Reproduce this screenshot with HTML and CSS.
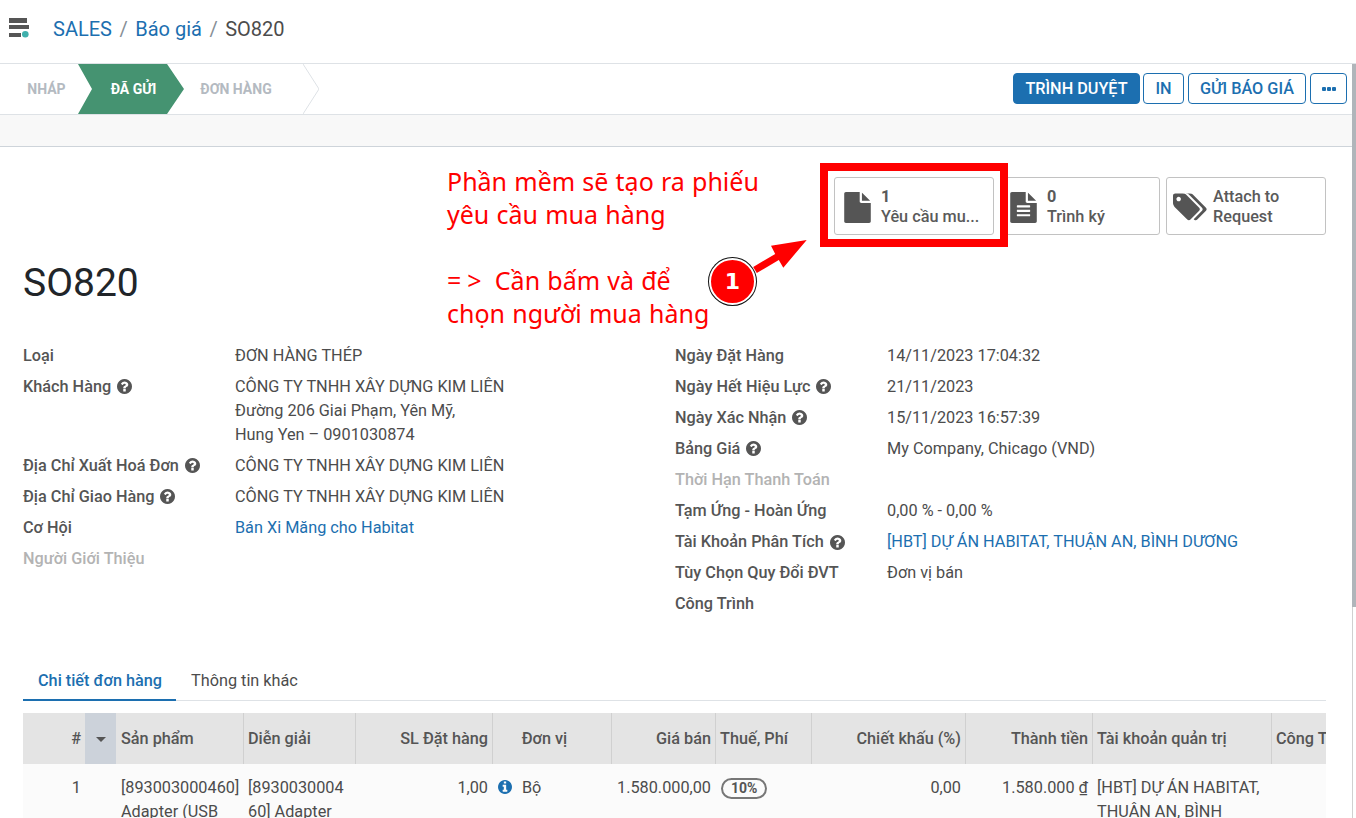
FILE: index.html
```html
<!DOCTYPE html>
<html lang="vi">
<head>
    <meta charset="UTF-8">
    <meta name="viewport" content="width=device-width, initial-scale=1.0">
    <title>SO820</title>
    <link rel="stylesheet" href="styles.css">
</head>
<body>
    <svg class="icon-defs" xmlns="http://www.w3.org/2000/svg">
        <symbol id="i-file" viewBox="128 0 1536 1792"><path d="M1152 512v-472q22 14 36 28l408 408q14 14 28 36h-472zm-128 32q0 40 28 68t68 28h544v1056q0 40-28 68t-68 28h-1344q-40 0-68-28t-28-68v-1600q0-40 28-68t68-28h800v544z"/></symbol>
        <symbol id="i-file-text" viewBox="128 0 1536 1792"><path d="M1596 476q14 14 28 36h-472v-472q22 14 36 28zm-476 164h544v1056q0 40-28 68t-68 28h-1344q-40 0-68-28t-28-68v-1600q0-40 28-68t68-28h800v544q0 40 28 68t68 28zm160 736v-64q0-14-9-23t-23-9h-704q-14 0-23 9t-9 23v64q0 14 9 23t23 9h704q14 0 23-9t9-23zm0-256v-64q0-14-9-23t-23-9h-704q-14 0-23 9t-9 23v64q0 14 9 23t23 9h704q14 0 23-9t9-23zm0-256v-64q0-14-9-23t-23-9h-704q-14 0-23 9t-9 23v64q0 14 9 23t23 9h704q14 0 23-9t9-23z"/></symbol>
        <symbol id="i-tags" viewBox="0 128 1920 1536"><path d="M448 448q0-53-37.500-90.500t-90.500-37.500-90.500 37.500-37.500 90.500 37.500 90.500 90.500 37.500 90.500-37.500 37.500-90.500zm1067 576q0 53-37 90l-491 492q-39 37-91 37-53 0-90-37l-715-716q-38-37-64.500-101t-26.500-117v-416q0-52 38-90t90-38h416q53 0 117 26.500t102 64.500l715 714q37 39 37 91zm384 0q0 53-37 90l-491 492q-39 37-91 37-36 0-59-14t-53-45l470-470q37-37 37-90 0-52-37-91l-715-714q-38-38-102-64.500t-117-26.500h224q53 0 117 26.500t102 64.500l715 714q37 39 37 91z"/></symbol>
        <symbol id="i-help" viewBox="128 128 1536 1536"><path d="M1024 1376v-192q0-14-9-23t-23-9h-192q-14 0-23 9t-9 23v192q0 14 9 23t23 9h192q14 0 23-9t9-23zm256-672q0-88-55.500-163t-138.500-116-170-41q-243 0-371 213-15 24 8 42l132 100q7 6 19 6 16 0 25-12 53-68 86-92 34-24 86-24 48 0 85.500 26t37.500 59q0 38-20 61t-68 45q-63 28-115.500 86.500t-52.500 125.500v36q0 14 9 23t23 9h192q14 0 23-9t9-23q0-19 21.500-49.500t54.500-49.500q32-18 49-28.500t46-35 44.500-48 28-60.500 12.500-81zm384 192q0 209-103 385.500t-279.500 279.500-385.500 103-385.500-103-279.500-279.500-103-385.500 103-385.500 279.500-279.500 385.500-103 385.500 103 279.500 279.500 103 385.500z"/></symbol>
        <symbol id="i-info" viewBox="128 128 1536 1536"><path d="M1152 1376v-160q0-14-9-23t-23-9h-96v-512q0-14-9-23t-23-9h-320q-14 0-23 9t-9 23v160q0 14 9 23t23 9h96v320h-96q-14 0-23 9t-9 23v160q0 14 9 23t23 9h448q14 0 23-9t9-23zm-128-896v-160q0-14-9-23t-23-9h-192q-14 0-23 9t-9 23v160q0 14 9 23t23 9h192q14 0 23-9t9-23zm640 416q0 209-103 385.500t-279.500 279.500-385.500 103-385.500-103-279.500-279.500-103-385.500 103-385.500 279.500-279.500 385.500-103 385.500 103 279.500 279.500 103 385.500z"/></symbol>
    </svg>

    <header class="topbar">
        <svg class="logo" viewBox="0 0 21 20" width="21" height="20">
            <rect x="0" y="0" width="18" height="5" fill="#555"/>
            <rect x="0" y="7" width="20" height="4" fill="#555"/>
            <rect x="0" y="15" width="12" height="4" fill="#555"/>
            <circle cx="16.300" cy="16.300" r="3.300" fill="#3fb0ac"/>
        </svg>
        <nav class="breadcrumb">
            <a>SALES</a><span class="sep">/</span><a>Báo giá</a><span class="sep">/</span><span>SO820</span>
        </nav>
    </header>

    <div class="statusbar">
        <div class="stages">
            <div class="stage stage-draft">NHÁP</div>
            <div class="stage stage-active">ĐÃ GỬI</div>
            <div class="stage stage-next">ĐƠN HÀNG</div>
            <svg class="stage-end" viewBox="0 0 16 50" width="16" height="50"><path d="M0 0L16 25L0 50" fill="none" stroke="#dee2e6"/></svg>
        </div>
        <div class="actions">
            <button class="btn btn-primary btn-approve">TRÌNH DUYỆT</button>
            <button class="btn btn-print">IN</button>
            <button class="btn btn-send">GỬI BÁO GIÁ</button>
            <button class="btn btn-more"><span class="dots"><i></i><i></i><i></i></span></button>
        </div>
    </div>
    <div class="band"></div>

    <main class="sheet">
        <div class="buttonbox">
            <div class="statbtn">
                <svg class="stat-icon"><use href="#i-file"/></svg>
                <div class="stat-text"><b>1</b><span>Yêu cầu mu...</span></div>
            </div>
            <div class="statbtn">
                <svg class="stat-icon"><use href="#i-file-text"/></svg>
                <div class="stat-text"><b>0</b><span>Trình ký</span></div>
            </div>
            <div class="statbtn">
                <svg class="stat-icon stat-icon-tags"><use href="#i-tags"/></svg>
                <div class="stat-text"><span>Attach to</span><span>Request</span></div>
            </div>
        </div>

        <h1 class="title">SO820</h1>

        <div class="groups">
            <div class="group">
                <div class="label">Loại</div><div class="value">ĐƠN HÀNG THÉP</div>
                <div class="label">Khách Hàng <svg class="help"><use href="#i-help"/></svg></div>
                <div class="value">CÔNG TY TNHH XÂY DỰNG KIM LIÊN<br>Đường 206 Giai Phạm, Yên Mỹ,<br>Hung Yen – 0901030874</div>
                <div class="label">Địa Chỉ Xuất Hoá Đơn <svg class="help"><use href="#i-help"/></svg></div>
                <div class="value">CÔNG TY TNHH XÂY DỰNG KIM LIÊN</div>
                <div class="label">Địa Chỉ Giao Hàng <svg class="help"><use href="#i-help"/></svg></div>
                <div class="value">CÔNG TY TNHH XÂY DỰNG KIM LIÊN</div>
                <div class="label">Cơ Hội</div><div class="value link">Bán Xi Măng cho Habitat</div>
                <div class="label muted">Người Giới Thiệu</div><div class="value"></div>
            </div>
            <div class="group">
                <div class="label">Ngày Đặt Hàng</div><div class="value">14/11/2023 17:04:32</div>
                <div class="label">Ngày Hết Hiệu Lực <svg class="help"><use href="#i-help"/></svg></div><div class="value">21/11/2023</div>
                <div class="label">Ngày Xác Nhận <svg class="help"><use href="#i-help"/></svg></div><div class="value">15/11/2023 16:57:39</div>
                <div class="label">Bảng Giá <svg class="help"><use href="#i-help"/></svg></div><div class="value">My Company, Chicago (VND)</div>
                <div class="label muted">Thời Hạn Thanh Toán</div><div class="value"></div>
                <div class="label">Tạm Ứng - Hoàn Ứng</div><div class="value">0,00 % - 0,00 %</div>
                <div class="label">Tài Khoản Phân Tích <svg class="help"><use href="#i-help"/></svg></div><div class="value link">[HBT] DỰ ÁN HABITAT, THUẬN AN, BÌNH DƯƠNG</div>
                <div class="label">Tùy Chọn Quy Đổi ĐVT</div><div class="value">Đơn vị bán</div>
                <div class="label">Công Trình</div><div class="value"></div>
            </div>
        </div>

        <div class="tabs">
            <a class="tab tab-active">Chi tiết đơn hàng</a>
            <a class="tab">Thông tin khác</a>
        </div>

        <div class="table-wrap">
            <table class="lines">
                <colgroup>
                    <col class="c-num"><col class="c-sort"><col class="c-product"><col class="c-desc"><col class="c-qty"><col class="c-uom"><col class="c-price"><col class="c-tax"><col class="c-disc"><col class="c-total"><col class="c-account"><col class="c-site">
                </colgroup>
                <thead>
                    <tr>
                        <th class="right plain">#</th>
                        <th class="sort"><span class="caret"></span></th>
                        <th class="plain">Sản phẩm</th>
                        <th>Diễn giải</th>
                        <th class="right">SL Đặt hàng</th>
                        <th class="center uom">Đơn vị</th>
                        <th class="right">Giá bán</th>
                        <th>Thuế, Phí</th>
                        <th class="right">Chiết khấu (%)</th>
                        <th class="right">Thành tiền</th>
                        <th>Tài khoản quản trị</th>
                        <th class="clip">Công Trình</th>
                    </tr>
                </thead>
                <tbody>
                    <tr>
                        <td class="right">1</td>
                        <td></td>
                        <td class="tight">[893003000460] Adapter (USB</td>
                        <td>[8930030004 60] Adapter</td>
                        <td class="right">1,00</td>
                        <td><svg class="info"><use href="#i-info"/></svg>Bộ</td>
                        <td class="right">1.580.000,00</td>
                        <td><span class="tax">10%</span></td>
                        <td class="right">0,00</td>
                        <td class="right">1.580.000 <u>₫</u></td>
                        <td>[HBT] DỰ ÁN HABITAT, THUẬN AN, BÌNH</td>
                        <td></td>
                    </tr>
                </tbody>
            </table>
        </div>
    </main>

    <div class="scrollbar"><div class="scroll-thumb"></div></div>

    <!-- chu thich mau do tren anh -->
    <div class="note">Phần mềm sẽ tạo ra phiếu<br>yêu cầu mua hàng<br><br><span class="note-sign">=&gt;</span> Cần bấm và để<br>chọn người mua hàng</div>
    <div class="redbox"></div>
    <svg class="arrow" viewBox="0 0 60 40" width="60" height="40">
        <path d="M3.200 32L25.200 19L21 10.700L56.700 5L33.300 32.700L28.800 25L6.800 38Z" fill="#f00"/>
    </svg>
    <div class="marker">1</div>
</body>
</html>
```

FILE: styles.css
```css
* {
    box-sizing: border-box;
}

html, body {
    height: 100%;
}

body {
    margin: 0;
    height: 818px;
    overflow: hidden;
    position: relative;
    background: #fff;
    color: #4c4c4c;
    font-family: Roboto, "Noto Sans", sans-serif;
    font-size: 16.25px;
    line-height: 24px;
}

.icon-defs {
    display: none;
}

.topbar {
    height: 64px;
    display: flex;
    align-items: center;
    padding-left: 9px;
    border-bottom: 1px solid #dee2e6;
}

.logo {
    margin: -7px 23px 0 0;
}

.breadcrumb {
    font-size: 20px;
    color: #4c4c4c;
    margin-top: -5px;
}

.breadcrumb a {
    color: #1c6fb0;
}

.sep {
    color: #868e96;
    margin: 0 7.5px;
}

.statusbar {
    height: 51px;
    display: flex;
    justify-content: space-between;
    border-bottom: 1px solid #dee2e6;
    padding-right: 9px;
}

.stages {
    display: flex;
    align-items: stretch;
}

.stage {
    display: flex;
    align-items: center;
    justify-content: center;
    font-size: 14px;
    font-weight: 700;
    color: #b4bac1;
    height: 50px;
}

.stage-draft {
    width: 78px;
    padding-left: 15px;
}

.stage-active {
    width: 106px;
    padding-left: 5px;
    background: #459371;
    color: #fff;
    clip-path: polygon(0 0, 84% 0, 100% 50%, 84% 100%, 0 100%, 14px 50%);
}

.stage-next {
    width: 119px;
    padding-right: 15px;
}

.actions {
    display: flex;
    align-items: flex-start;
    padding-top: 9px;
}

.btn {
    height: 31px;
    padding: 1px 0 0;
    border: 1px solid #1c6fb0;
    border-radius: 4px;
    background: #fff;
    color: #1c6fb0;
    font-family: inherit;
    font-size: 16.25px;
    font-weight: 500;
    line-height: 1;
}

.btn-primary {
    background: #1c6fb0;
    color: #fff;
}

.btn-approve {
    width: 127px;
}

.btn-print {
    width: 41px;
    margin-left: 3px;
}

.btn-send {
    width: 118px;
    margin-left: 4px;
}

.btn-more {
    width: 37px;
    margin-left: 4px;
}

.dots {
    display: flex;
    justify-content: center;
    gap: 1px;
}

.dots i {
    width: 4px;
    height: 4px;
    background: #1c6fb0;
    border-radius: 1px;
}

.band {
    height: 32px;
    background: #f8f8f8;
    border-bottom: 1px solid #ced4da;
}

.sheet {
    padding: 30px 30px 0 23px;
}

.buttonbox {
    display: flex;
    justify-content: flex-end;
    gap: 6px;
}

.statbtn {
    width: 160px;
    height: 58px;
    display: flex;
    align-items: center;
    padding-left: 9px;
    border: 1px solid #c2c2c2;
    border-radius: 3px;
    background: #fff;
    color: #5a5a5a;
}

.stat-icon {
    width: 27px;
    height: 31px;
    fill: #555;
    flex: none;
    margin: 2px 10px 0 0;
}

.stat-icon-tags {
    width: 34px;
    height: 28px;
    margin: 2px 6px 0 -3px;
}

.stat-text {
    display: flex;
    flex-direction: column;
    padding-top: 2px;
    line-height: 20px;
    font-weight: 500;
}

.stat-text b {
    font-weight: 700;
}

.title {
    margin: 23px 0 0;
    font-size: 39px;
    line-height: 50px;
    font-weight: 400;
    color: #212529;
}

.groups {
    display: flex;
    margin-top: 35.5px;
}

.group {
    flex: none;
    width: 652px;
    display: grid;
    grid-template-columns: 212px 1fr;
    grid-auto-rows: min-content;
    row-gap: 7.1px;
    align-content: start;
}

.label {
    color: #555;
    font-weight: 500;
    display: flex;
    align-items: center;
    gap: 6px;
    height: 24px;
}

.muted {
    color: #b3b3b3;
}

.value {
    min-height: 24px;
}

.link {
    color: #1c6fb0;
}

.help {
    width: 15px;
    height: 15px;
    fill: #555;
}

.tabs {
    display: flex;
    height: 40px;
    margin-top: 44.5px;
    border-bottom: 1px solid #dee2e6;
}

.tab {
    height: 40px;
    line-height: 40px;
    padding: 0 14px 0 15px;
}

.tab-active {
    color: #1c6fb0;
    font-weight: 500;
    border-bottom: 2px solid #1c6fb0;
}

.table-wrap {
    margin-top: 12px;
    overflow: hidden;
}

.lines {
    width: 1303px;
    table-layout: fixed;
    border-collapse: separate;
    border-spacing: 0;
}

.c-num { width: 62px; }
.c-sort { width: 31px; }
.c-product { width: 127px; }
.c-desc { width: 112px; }
.c-qty { width: 137px; }
.c-uom { width: 119px; }
.c-price { width: 104px; }
.c-tax { width: 96px; }
.c-disc { width: 154px; }
.c-total { width: 127px; }
.c-account { width: 179px; }
.c-site { width: 55px; }

.lines th {
    height: 51px;
    padding: 1px 4px 0 4px;
    background: #e4e4e4;
    border-left: 1px solid #d0d0d0;
    text-align: left;
    font-weight: 500;
    color: #555;
    white-space: nowrap;
}

.lines th.plain,
.lines th.sort {
    border-left: none;
}

.lines th.plain {
    padding-left: 5px;
}

.lines th.sort {
    background: #ccd2da;
    text-align: center;
}

.lines th.uom {
    padding-right: 19px;
}

.caret {
    display: inline-block;
    border-left: 5px solid transparent;
    border-right: 5px solid transparent;
    border-top: 5px solid #555;
    vertical-align: middle;
}

.lines th.clip {
    overflow: hidden;
}

.lines td {
    padding: 12px 4px 0 5px;
    background: #fbfbfb;
    vertical-align: top;
    overflow-wrap: anywhere;
}

.lines td.tight {
    padding-right: 0;
}

.lines .right {
    text-align: right;
}

.lines .center {
    text-align: center;
}

.info {
    width: 14px;
    height: 14px;
    fill: #1c6fb0;
    margin: 0 10px 0 1px;
    vertical-align: -1px;
}

.tax {
    display: inline-block;
    height: 21px;
    margin-left: 1px;
    padding: 0 8px;
    border: 2px solid #777;
    border-radius: 11px;
    font-size: 14px;
    font-weight: 700;
    line-height: 17px;
    color: #555;
}

.scrollbar {
    position: absolute;
    top: 64px;
    right: 0;
    bottom: 0;
    width: 4px;
    background: #fff;
    border-left: 1px solid #d0d0d0;
}

.scroll-thumb {
    height: 543px;
    margin-left: -1px;
    background: #b0b5ba;
}

/* chu thich */
.note {
    position: absolute;
    left: 447px;
    top: 165px;
    color: #f00;
    font-family: "Noto Sans", sans-serif;
    font-size: 25px;
    line-height: 33px;
    word-spacing: 0.7px;
    white-space: nowrap;
}

.note-sign {
    letter-spacing: 6px;
}

.redbox {
    position: absolute;
    left: 820px;
    top: 163px;
    width: 188px;
    height: 84px;
    border: 8px solid #f00;
}

.arrow {
    position: absolute;
    left: 750px;
    top: 235px;
}

.marker {
    position: absolute;
    left: 709px;
    top: 258px;
    width: 47px;
    height: 47px;
    display: flex;
    align-items: center;
    justify-content: center;
    border-radius: 50%;
    background: #f00;
    border: 2px solid #fff;
    box-shadow: 0 0 0 1px #111;
    color: #fff;
    font-family: "DejaVu Sans", sans-serif;
    font-weight: 700;
    font-size: 22px;
    line-height: 1;
}
```
